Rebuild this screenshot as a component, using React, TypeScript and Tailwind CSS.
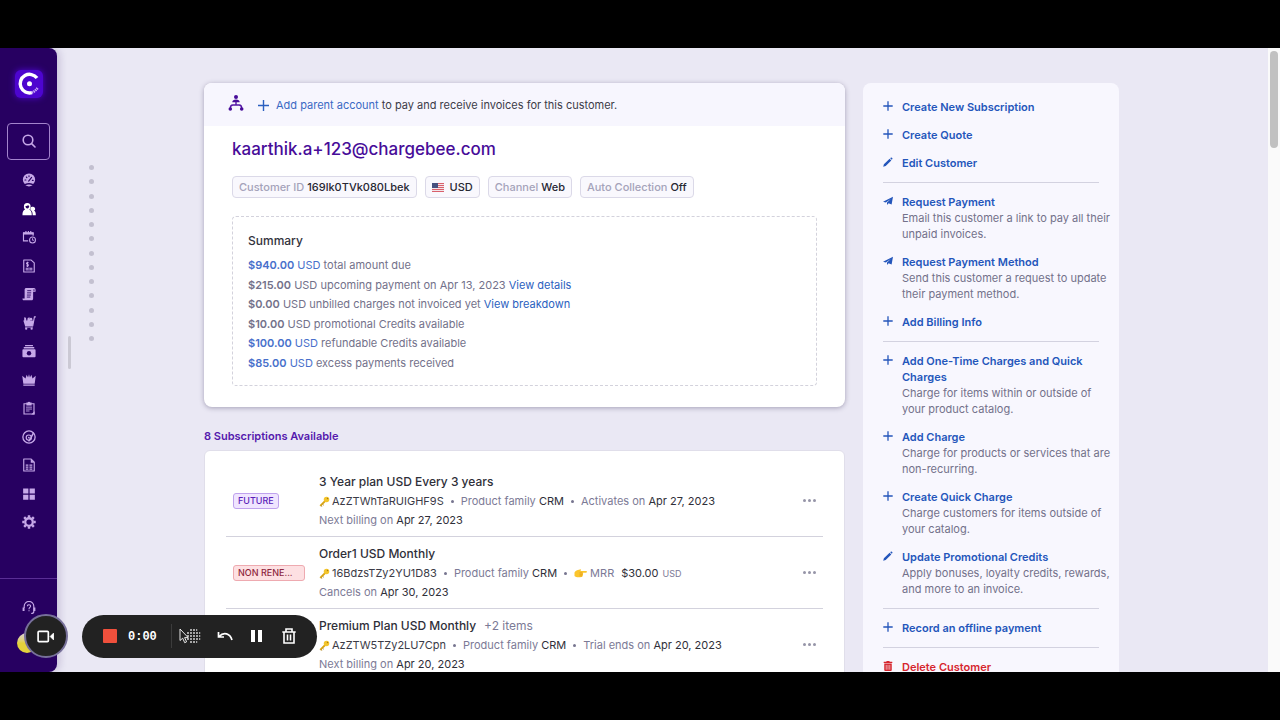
import type { ReactNode } from 'react';
import { FaTrashAlt } from 'react-icons/fa';

type IconName = 'plus' | 'pencil' | 'send' | 'trash';

type Action = { icon: IconName; label: string; text?: string };

const actionGroups: Action[][] = [
  [
    { icon: 'plus', label: 'Create New Subscription' },
    { icon: 'plus', label: 'Create Quote' },
    { icon: 'pencil', label: 'Edit Customer' },
  ],
  [
    { icon: 'send', label: 'Request Payment', text: 'Email this customer a link to pay all their unpaid invoices.' },
    { icon: 'send', label: 'Request Payment Method', text: 'Send this customer a request to update their payment method.' },
    { icon: 'plus', label: 'Add Billing Info' },
  ],
  [
    { icon: 'plus', label: 'Add One-Time Charges and Quick Charges', text: 'Charge for items within or outside of your product catalog.' },
    { icon: 'plus', label: 'Add Charge', text: 'Charge for products or services that are non-recurring.' },
    { icon: 'plus', label: 'Create Quick Charge', text: 'Charge customers for items outside of your catalog.' },
    { icon: 'pencil', label: 'Update Promotional Credits', text: 'Apply bonuses, loyalty credits, rewards, and more to an invoice.' },
  ],
  [{ icon: 'plus', label: 'Record an offline payment' }],
  [{ icon: 'trash', label: 'Delete Customer' }],
];

const summary = [
  { amount: '$940.00', text: 'total amount due', linked: true },
  { amount: '$215.00', text: 'upcoming payment on Apr 13, 2023', more: 'View details' },
  { amount: '$0.00', text: 'unbilled charges not invoiced yet', more: 'View breakdown' },
  { amount: '$10.00', text: 'promotional Credits available' },
  { amount: '$100.00', text: 'refundable Credits available', linked: true },
  { amount: '$85.00', text: 'excess payments received', linked: true },
];

const navIcons: { label: string; art: ReactNode }[] = [
  {
    label: 'Dashboard',
    art: (
      <>
        <path fill="currentColor" d="M3.2 12.6A7 7 0 1 1 12.8 12.6Q8 10.4 3.2 12.6ZM3.8 14q4.2-2 8.4 0-4.2 2.6-8.4 0Z" />
        <path stroke="#270061" strokeWidth="1.3" strokeLinecap="round" d="M7.6 9.2 11 5M3.4 8h1M11.8 8.4h1M5 4.6l.6.6M8 3.2v.9" />
      </>
    ),
  },
  {
    label: 'Customers',
    art: (
      <>
        <path fill="#fff" d="M6 1a3.8 3.8 0 0 1 3.8 4c0 1.6-.6 2.8-1.4 3.6 1.6.8 2.8 2.4 2.8 6.4H.5c0-3.6.8-5.4 3-6.4C2.6 7.8 2.2 6.6 2.2 5A3.8 3.8 0 0 1 6 1Z" />
        <path fill="#fff" d="M12.5 5.5a2.4 2.4 0 0 1 1.3 4.5c1.5.6 2 2.2 2 5h-3.6c0-2.5-.5-4-1.7-5.2a2.4 2.4 0 0 1 2-4.3Z" />
        <path fill="#270061" d="M4 4.6c1.5 0 2.5-.4 3-1.1.3.7.7 1 1.2 1.1 0 1.8-.9 2.9-2.1 2.9S4 6.4 4 4.6Z" />
      </>
    ),
  },
  {
    label: 'Subscriptions',
    art: (
      <>
        <path stroke="currentColor" strokeWidth="1.3" d="M7 12.5H1.7V3.5h11v3M4.5 1v3M7.3 1v3M10 1v3" />
        <path fill="currentColor" d="M1.1 2.6h12.2v2.6H1.1z" />
        <circle cx="12" cy="11.5" r="3.4" stroke="currentColor" strokeWidth="1.2" />
        <path stroke="currentColor" d="M12 9.4v2.3h1.7" />
      </>
    ),
  },
  {
    label: 'Invoices',
    art: (
      <>
        <path stroke="currentColor" strokeWidth="1.3" strokeLinejoin="round" d="M2 1.2h8.5L14 4.5v10.3H2z" />
        <path stroke="currentColor" strokeWidth="1.2" d="M7.6 4.3c-2.6-.8-3.2 1.2-1.5 1.7 2 .5 1.4 2.5-1.2 1.8M6.3 3v6" />
        <path fill="currentColor" d="M4.3 10h7.5v3H4.3z" />
        <path stroke="#270061" strokeWidth=".6" d="M4.3 11.5h7.5M8 10v3" />
      </>
    ),
  },
  {
    label: 'Credit Notes',
    art: (
      <>
        <path fill="currentColor" d="M5 1h8.5c1.5 0 2 1 2 2.3V5.5h-2.8V13c0 1.4-.8 2.2-2 2.2H2.2C1 15.2.5 14.2.5 13h2.5V3C3 1.7 3.8 1 5 1Z" />
        <path stroke="#270061" d="M6 4.2h4.5M5.8 6.7h4.7M5.6 9.2h4.6M5.5 11.5h4M13.7 2.5v2" />
      </>
    ),
  },
  {
    label: 'Orders',
    art: (
      <>
        <path fill="currentColor" d="M1.5 5h11.7l-1 6.5H3.5zM2.5 1.5l2 .5.5 3-2.5.2zM6.5 2.2l2-.8 1 3.8H6z" />
        <circle cx="10.3" cy="3.6" r="1.5" fill="currentColor" />
        <path stroke="currentColor" strokeWidth="1.3" d="M15.8 1h-1.6l-2 10.5M3.5 12.6h9" />
        <circle cx="4.8" cy="14.5" r="1.3" fill="currentColor" />
        <circle cx="11" cy="14.5" r="1.3" fill="currentColor" />
      </>
    ),
  },
  {
    label: 'Payments',
    art: (
      <>
        <path fill="currentColor" d="M3.5 1h9v1.5h-9zM2 3.4h12V5H2zM1.5 6h13c.7 0 1 .4 1 1v7c0 .6-.3 1-1 1h-13c-.7 0-1-.4-1-1V7c0-.6.3-1 1-1Z" />
        <circle cx="8" cy="10.5" r="2.5" fill="#270061" />
      </>
    ),
  },
  {
    label: 'Plans',
    art: (
      <path fill="currentColor" d="M.3 3.2 4 6.4 5.3 2 6.9 5.200 8 1.500l1.100 3.700L10.700 2 12 6.400l3.700-3.200-1.200 9h-13zM1.500 13h13v1.500h-13z" />
    ),
  },
  {
    label: 'Logs',
    art: (
      <>
        <path stroke="currentColor" strokeWidth="1.3" d="M2.3 3.2h11.4v11.6H2.3z" />
        <path fill="currentColor" d="M5 1.8h1.5a1.6 1.6 0 0 1 3 0H11V5H5zM10.5 15.4h3.9v-3.7z" />
        <path stroke="currentColor" d="M4.6 7h6.8M4.6 9.2h6.8M4.6 11.4h4" />
      </>
    ),
  },
  {
    label: 'Usages',
    art: (
      <>
        <circle cx="8" cy="8" r="7" stroke="currentColor" strokeWidth="1.5" />
        <circle cx="7.8" cy="8.7" r="3" stroke="currentColor" strokeWidth="1.4" />
        <circle cx="7.8" cy="8.7" r="1" fill="currentColor" />
        <path stroke="currentColor" strokeWidth="1.8" d="m13.2 3.2-3 5.5L7.5 13" />
      </>
    ),
  },
  {
    label: 'Reports',
    art: (
      <>
        <path stroke="currentColor" strokeWidth="1.3" strokeLinejoin="round" d="M2 1.2h8.5L14 4.8v10H2z" />
        <path fill="currentColor" d="M10 1v4.3h4zM4.3 7.3h3v1.5h-3zM8.5 7.3h3.3v1.5H8.5zM4.3 9.6h3v1.5h-3zM8.5 9.6h3.3v1.5H8.5zM4.3 12h3v1.4h-3zM8.5 12h3.3v1.4H8.5z" />
      </>
    ),
  },
  {
    label: 'Apps',
    art: <path fill="currentColor" d="M1.3 1.7h6v5.8h-6zM8.7 1.7h6v5.8h-6zM1.3 8.9h6v5.8h-6zM8.7 8.9h6v5.8h-6z" />,
  },
  {
    label: 'Settings',
    art: (
      <>
        <circle cx="8" cy="8" r="4.3" stroke="currentColor" strokeWidth="2.6" />
        <path stroke="currentColor" strokeWidth="2.8" d="M8 .3v2.5M8 13.2v2.5M.3 8h2.5M13.2 8h2.5M2.5 2.5l1.8 1.8M11.7 11.7l1.8 1.8M13.5 2.5l-1.8 1.8M4.3 11.7l-1.8 1.8" />
      </>
    ),
  },
];

const dots = Array.from({ length: 13 }, (_, i) => i);

function ActionIcon({ name }: { name: IconName }) {
  if (name === 'trash') return <FaTrashAlt className="size-[10px]" />;
  if (name === 'send') {
    return (
      <svg viewBox="0 0 10 10" className="size-[10px]" fill="currentColor">
        <path d="M0 5.8 10 .8 8.600 8.600 5.500 7.300 4 9V6.600L7.800 3 2.800 6.600z" />
      </svg>
    );
  }
  if (name === 'pencil') {
    return (
      <svg viewBox="0 0 10 10" className="size-[10px]" fill="currentColor">
        <path d="M.2 9.8.9 7.300 6.600 1.800 8.300 3.500 2.700 9.100zM7.200 1.200l.8-.7c.6-.5 1.900.8 1.400 1.400l-.7.900z" />
      </svg>
    );
  }
  return (
    <svg viewBox="0 0 10 10" className="size-[10px]" stroke="currentColor" strokeWidth="1.3">
      <path d="M5 .3v9.400M.3 5h9.400" />
    </svg>
  );
}

function KeyIcon() {
  return (
    <svg viewBox="0 0 12 12" className="size-[11px]" fill="none">
      <path stroke="#d9a514" strokeWidth="2" d="M7 5.2 1.3 10.7" />
      <path stroke="#a87a12" d="m2.2 10.4 1.3 1.2M4 8.900l1.200 1.200" />
      <circle cx="8.2" cy="3.800" r="3" fill="#f3c52c" />
      <circle cx="9.3" cy="2.700" r=".8" fill="#a87a12" />
    </svg>
  );
}

function HandIcon() {
  return (
    <svg viewBox="0 0 13 11" className="h-[11px] w-[13px]">
      <path fill="#fbc52d" d="M.5 4.5C1.5 2.7 3.5 2 5 1.8c1-.8 2-.8 2 0L6.5 3h5.700c1 0 1 1.700 0 1.700H8.500c1 .4.800 1.400.2 1.600.6.500.3 1.400-.4 1.500.3.800-.2 1.300-.9 1.300C4.500 9.600 1.500 9.400.5 8z" />
      <path stroke="#dc9418" strokeWidth=".6" fill="none" d="M5.5 4.800h3M5.600 6.300h3M5.600 7.800h2.700" />
    </svg>
  );
}

function FlagIcon() {
  return (
    <svg viewBox="0 0 12 9" className="h-[9px] w-3">
      <path fill="#f1e6ea" d="M0 0h12v9H0z" />
      <path stroke="#d9606c" d="M0 .5h12M0 2.500h12M0 4.500h12M0 6.500h12M0 8.500h12" />
      <path fill="#46507f" d="M0 0h6v5H0z" />
    </svg>
  );
}

function Chip({ label, children }: { label?: string; children: ReactNode }) {
  return (
    <span className="flex h-[22px] items-center gap-[3px] rounded border border-[#dbd9e8] bg-[#f9f8fd] px-[6px] text-[11px] font-medium text-[#272733]">
      {label && <span className="text-[#a5a3ba]">{label}</span>}
      {children}
    </span>
  );
}

function Bullet() {
  return <span className="mx-[7px] size-[3px] rounded-full bg-[#77758f]" />;
}

function Subscription(props: {
  badge?: ReactNode;
  title: string;
  extra?: string;
  id: string;
  detail: ReactNode;
  note: string;
  date: string;
}) {
  return (
    <li className="flex h-[72px] shrink-0 items-center border-b border-[#d3d2dd] pl-[7px] pr-[6px]">
      <div className="flex w-[86px] shrink-0">{props.badge}</div>
      <div className="flex-1 whitespace-nowrap text-[11px] leading-[19px] text-[#7c7a96]">
        <h3 className="text-[12px] leading-5 font-medium text-[#2f2f39]">
          {props.title}
          {props.extra && <span className="ml-2 font-normal text-[#7c7a96]">{props.extra}</span>}
        </h3>
        <div className="flex items-center">
          <KeyIcon />
          <span className="ml-[2px] text-[#3b3b47]">{props.id}</span>
          <Bullet />
          <span>
            Product family <span className="text-[#2f2f39]">CRM</span>
          </span>
          <Bullet />
          {props.detail}
        </div>
        <p>
          {props.note} <span className="text-[#2f2f39]">{props.date}</span>
        </p>
      </div>
      <button aria-label="More options" className="flex gap-[2px] p-px">
        <span className="size-[3px] rounded-full bg-[#9695a8]" />
        <span className="size-[3px] rounded-full bg-[#9695a8]" />
        <span className="size-[3px] rounded-full bg-[#9695a8]" />
      </button>
    </li>
  );
}

function Sidebar() {
  return (
    <aside className="flex w-[57px] shrink-0 flex-col items-center rounded-r-lg bg-[#270061] pt-[22px] text-[#c6a8e8] shadow-[2px_0_8px_rgba(39,0,97,0.2)]">
      <a href="#home" aria-label="Chargebee" className="rounded-md bg-[#4d05cf] shadow-[0_0_6px_#4d05cf]">
        <svg viewBox="0 0 28 28" className="size-7" fill="none">
          <path stroke="#fff" strokeWidth="3.4" d="M22 8.100A9.300 9.300 0 1 0 17 22.600" />
          <path stroke="#c9a9f5" strokeWidth="2.6" strokeDasharray="1.5 .6" d="M16.500 22.500q3.500-.9 6-4.500" />
          <circle cx="14.5" cy="13.800" r="2.500" fill="#fff" />
        </svg>
      </a>
      <button aria-label="Search" className="mt-[25px] flex h-[37px] w-[43px] items-center justify-center rounded border border-[#a384cc] pb-[2px]">
        <svg viewBox="0 0 14 14" className="size-[14px]" fill="none" stroke="currentColor" strokeWidth="1.6">
          <circle cx="6" cy="6" r="4.800" />
          <path strokeLinecap="round" d="m9.600 9.600 3.400 3.400" />
        </svg>
      </button>
      <nav className="mt-[13px] flex h-[356px] shrink-0 flex-col justify-between">
        {navIcons.map((item) => (
          <a key={item.label} href="#nav" aria-label={item.label}>
            <svg viewBox="0 0 16 16" className="size-[14px]" fill="none">
              {item.art}
            </svg>
          </a>
        ))}
      </nav>
      <div className="mt-auto flex h-[94px] w-full flex-col items-center border-t border-[#5a2e95] pt-[22px]">
        <a href="#help" aria-label="Help">
          <svg viewBox="0 0 16 16" className="size-[14px]" fill="none" stroke="currentColor" strokeWidth="1.3">
            <path d="M2.500 8V6a5.500 5.500 0 0 1 11 0v6c0 1.500-1 2.300-3 2.300" />
            <path strokeWidth="2.2" d="M1.800 7.500v4M14.200 7.500v4" />
            <path d="M6.200 6c0-2.500 3.800-2.200 3.600 0C9.700 7.500 8 7.300 8 9.300M8 10.500v1.300" />
          </svg>
        </a>
        <span className="mr-1 mt-[18px] size-5 rounded-full bg-linear-to-b from-[#d9cfd6] to-[#e4d23c] to-50%" />
      </div>
    </aside>
  );
}

function CustomerCard() {
  return (
    <section className="rounded-lg bg-white shadow-[0_1px_5px_rgba(60,50,90,0.4)]">
      <div className="flex h-[43px] items-center rounded-t-lg bg-[#f7f6fe] pl-6 pt-[2px] text-[11px] text-[#3c3b48]">
        <svg viewBox="0 0 16 16" className="mb-[6px] size-4" fill="none">
          <circle cx="8" cy="2" r="2" fill="#470c99" />
          <path fill="#470c99" d="M4.300 7.300c0-2 1.500-2.900 3.700-2.900s3.700.9 3.700 2.900z" />
          <path stroke="#5316a5" strokeWidth="1.400" d="M8 7v3M2.300 13.500c0-2.500.5-3.500 2.500-3.500h6.400c2 0 2.500 1 2.500 3.500" />
          <circle cx="2.300" cy="14" r="1.800" fill="#470c99" />
          <circle cx="13.700" cy="14" r="1.800" fill="#470c99" />
        </svg>
        <svg viewBox="0 0 11 11" className="ml-[14px] size-[11px]" stroke="#2b5fc0" strokeWidth="1.4">
          <path d="M5.500 0v11M0 5.500h11" />
        </svg>
        <p className="ml-[7px]">
          <a href="#parent" className="text-[#3a69c4]">Add parent account</a> to pay and receive invoices for this customer.
        </p>
      </div>
      <div className="px-7 pb-[21px] pt-[11px]">
        <h1 className="text-[17px] leading-6 font-medium text-[#470c99]">kaarthik.a+123@chargebee.com</h1>
        <div className="mt-[15px] flex gap-2">
          <Chip label="Customer ID">169lk0TVk080Lbek</Chip>
          <Chip>
            <FlagIcon />
            <span className="ml-[3px]">USD</span>
          </Chip>
          <Chip label="Channel">Web</Chip>
          <Chip label="Auto Collection">Off</Chip>
        </div>
        <div className="mt-[18px] rounded border border-dashed border-[#d3d2dc] px-[15px] pb-[14px] pt-[14px]">
          <h2 className="text-[12px] leading-5 font-medium text-[#33333d]">Summary</h2>
          <ul className="mt-[6px] flex h-[114px] flex-col justify-between text-[11px] leading-4 text-[#73718a]">
            {summary.map((row) => (
              <li key={row.amount}>
                {row.linked ? (
                  <a href="#amount" className="text-[#4870cb]">
                    <b className="font-semibold">{row.amount}</b> USD
                  </a>
                ) : (
                  <>
                    <b className="font-semibold">{row.amount}</b> USD
                  </>
                )}{' '}
                {row.text}{' '}
                {row.more && <a href="#more" className="text-[#2b5fc0]">{row.more}</a>}
              </li>
            ))}
          </ul>
        </div>
      </div>
    </section>
  );
}

function ActionsPanel() {
  return (
    <aside className="w-64 shrink-0 self-start rounded-lg bg-[#f8f7fe] pb-4 pl-5 pr-1 pt-4 text-[11px] leading-4">
      {actionGroups.map((group, i) => (
        <div key={i}>
          {i > 0 && <hr className="my-[11px] mr-4 border-[#d3d2e0]" />}
          <ul className="flex flex-col gap-3">
            {group.map((action) => (
              <li key={action.label} className={action.icon === 'trash' ? 'flex text-[#d6262e]' : 'flex text-[#2456bb]'}>
                <span className="mr-[9px] mt-[2px] shrink-0">
                  <ActionIcon name={action.icon} />
                </span>
                <div>
                  <a href="#action" className="block pr-4 font-semibold">{action.label}</a>
                  {action.text && <p className="text-[#73718a]">{action.text}</p>}
                </div>
              </li>
            ))}
          </ul>
        </div>
      ))}
    </aside>
  );
}

function Recorder() {
  return (
    <div className="absolute bottom-[14px] left-6 flex items-center gap-[14px]">
      <button aria-label="Camera" className="flex size-11 items-center justify-center rounded-full border-2 border-[#77709a] bg-[#222]">
        <svg viewBox="0 0 20 14" className="h-[13px] w-5" fill="none" stroke="#fff" strokeWidth="1.8" strokeLinejoin="round">
          <rect x="1.500" y="1.500" width="11" height="11" rx="1" />
          <path fill="#fff" strokeWidth="1" d="m14.500 7 3.500-3.500v7z" />
        </svg>
      </button>
      <div className="flex h-[43px] w-[235px] items-center rounded-full bg-[#222] pl-[21px] text-white">
        <button aria-label="Stop" className="size-[14px] rounded-[1px] bg-[#f0503c]" />
        <span className="ml-[11px] pt-[2px] font-['Liberation_Mono',monospace] text-[12px] font-bold">0:00</span>
        <span className="ml-[14px] h-6 w-px bg-[#3c3c3c]" />
        <button aria-label="Drawing tools" className="ml-[7px]">
          <svg viewBox="0 0 24 18" className="h-[18px] w-6" fill="none">
            <path
              stroke="#fff"
              strokeWidth="1.600"
              strokeDasharray="1.600 1.400"
              d="M11.200 3h7M8.200 6h13M8.200 9h13M8.200 12h13M11.200 15h7"
            />
            <path fill="#222" stroke="#fff" strokeWidth=".9" d="M1 2v11.500l2.700-2.300 2 4.500 1.900-.9-2-4.200h3.600z" />
          </svg>
        </button>
        <button aria-label="Restart" className="ml-[14px]">
          <svg viewBox="0 0 16 14" className="h-[14px] w-4" fill="none" stroke="#fff" strokeWidth="1.7">
            <path d="M1.500 3v5H7M2 7.500C7 2.500 13 4.500 15 11" />
          </svg>
        </button>
        <button aria-label="Pause" className="ml-[18px] flex gap-[3px]">
          <span className="h-3 w-1 bg-white" />
          <span className="h-3 w-1 bg-white" />
        </button>
        <button aria-label="Delete" className="ml-5">
          <svg viewBox="0 0 14 16" className="h-4 w-[14px]" fill="none" stroke="#fff" strokeWidth="1.6">
            <path d="M.3 4h13.400M4 4V1h6v3M2 4v11h10V4M5.500 6.500v6M8.500 6.500v6" />
          </svg>
        </button>
      </div>
    </div>
  );
}

export default function App() {
  return (
    <div className="h-screen bg-black py-12 font-['Inter',sans-serif]">
      <div className="relative flex h-full overflow-hidden bg-[#eae8f4]">
        <Sidebar />
        <main className="flex min-w-0 flex-1 pr-[149px]">
          <div className="flex w-[147px] shrink-0">
            <span className="ml-[11px] mt-[288px] h-[33px] w-[3px] rounded-full bg-[#cbc9d4]" />
            <div className="ml-[18px] mt-[117px] flex h-[176px] flex-col justify-between">
              {dots.map((i) => (
                <span key={i} className="size-[5px] rounded-full bg-[#c3c0d0]" />
              ))}
            </div>
          </div>
          <div className="flex min-w-0 flex-1 gap-[18px] pt-[35px]">
            <div className="min-w-0 flex-1">
              <CustomerCard />
              <h2 className="mt-[21px] text-[11px] leading-4 font-semibold text-[#5519ad]">8 Subscriptions Available</h2>
              <ul className="mt-[6px] rounded-md border border-[#e0deea] bg-white px-[21px] pt-[14px]">
                <Subscription
                  badge={
                    <span className="rounded-[3px] border border-[#bfa2ed] bg-[#f0e5ff] px-1 text-[9px] leading-[14px] font-medium text-[#5b1eb8]">
                      FUTURE
                    </span>
                  }
                  title="3 Year plan USD Every 3 years"
                  id="AzZTWhTaRUIGHF9S"
                  detail={<span>Activates on <span className="text-[#2f2f39]">Apr 27, 2023</span></span>}
                  note="Next billing on"
                  date="Apr 27, 2023"
                />
                <Subscription
                  badge={
                    <span className="w-[72px] rounded-[3px] border border-[#eeaab0] bg-[#fde0e2] px-1 text-[9px] leading-[14px] font-medium text-[#8e2740]">
                      NON RENE...
                    </span>
                  }
                  title="Order1 USD Monthly"
                  id="16BdzsTZy2YU1D83"
                  detail={
                    <span className="flex items-center">
                      <HandIcon />
                      <span className="ml-[3px]">MRR</span>
                      <span className="ml-[7px] text-[#2f2f39]">$30.00</span>
                      <span className="ml-1 text-[9px]">USD</span>
                    </span>
                  }
                  note="Cancels on"
                  date="Apr 30, 2023"
                />
                <Subscription
                  title="Premium Plan USD Monthly"
                  extra="+2 items"
                  id="AzZTW5TZy2LU7Cpn"
                  detail={<span>Trial ends on <span className="text-[#2f2f39]">Apr 20, 2023</span></span>}
                  note="Next billing on"
                  date="Apr 20, 2023"
                />
              </ul>
            </div>
            <ActionsPanel />
          </div>
        </main>
        <div className="w-3 shrink-0 bg-[#fafafa] px-[2px] pt-[3px]">
          <div className="h-[97px] rounded-full bg-[#c1c1c1]" />
        </div>
        <Recorder />
      </div>
    </div>
  );
}
